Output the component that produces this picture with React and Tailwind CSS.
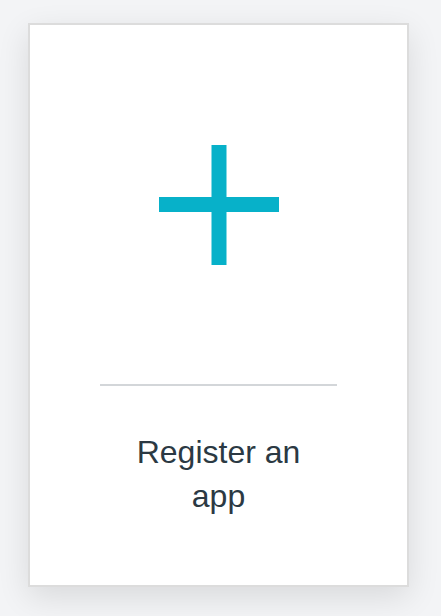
export default function App() {
  return (
    <div className="min-h-screen bg-[#f3f4f6] pt-[23px] pl-[28px] font-['Liberation_Sans',Arial,sans-serif]">
      <div className="w-[381px] h-[564px] border-2 border-[#dcdcdc] bg-white shadow-[0_10px_30px_rgba(0,0,0,0.11)] flex flex-col items-center">
        <svg width="120" height="120" viewBox="0 0 120 120" className="mt-[120px]">
          <rect x="52.5" y="0" width="15" height="120" fill="#07b1c9" />
          <rect x="0" y="52" width="120" height="15" fill="#07b1c9" />
        </svg>
        <div className="mt-[119px] w-[237px] h-[2px] bg-[#d3d6d9]" />
        <p className="mt-[44px] w-[200px] text-center text-[32px] leading-[44px] text-[#2b3943]">
          Register an app
        </p>
      </div>
    </div>
  );
}
